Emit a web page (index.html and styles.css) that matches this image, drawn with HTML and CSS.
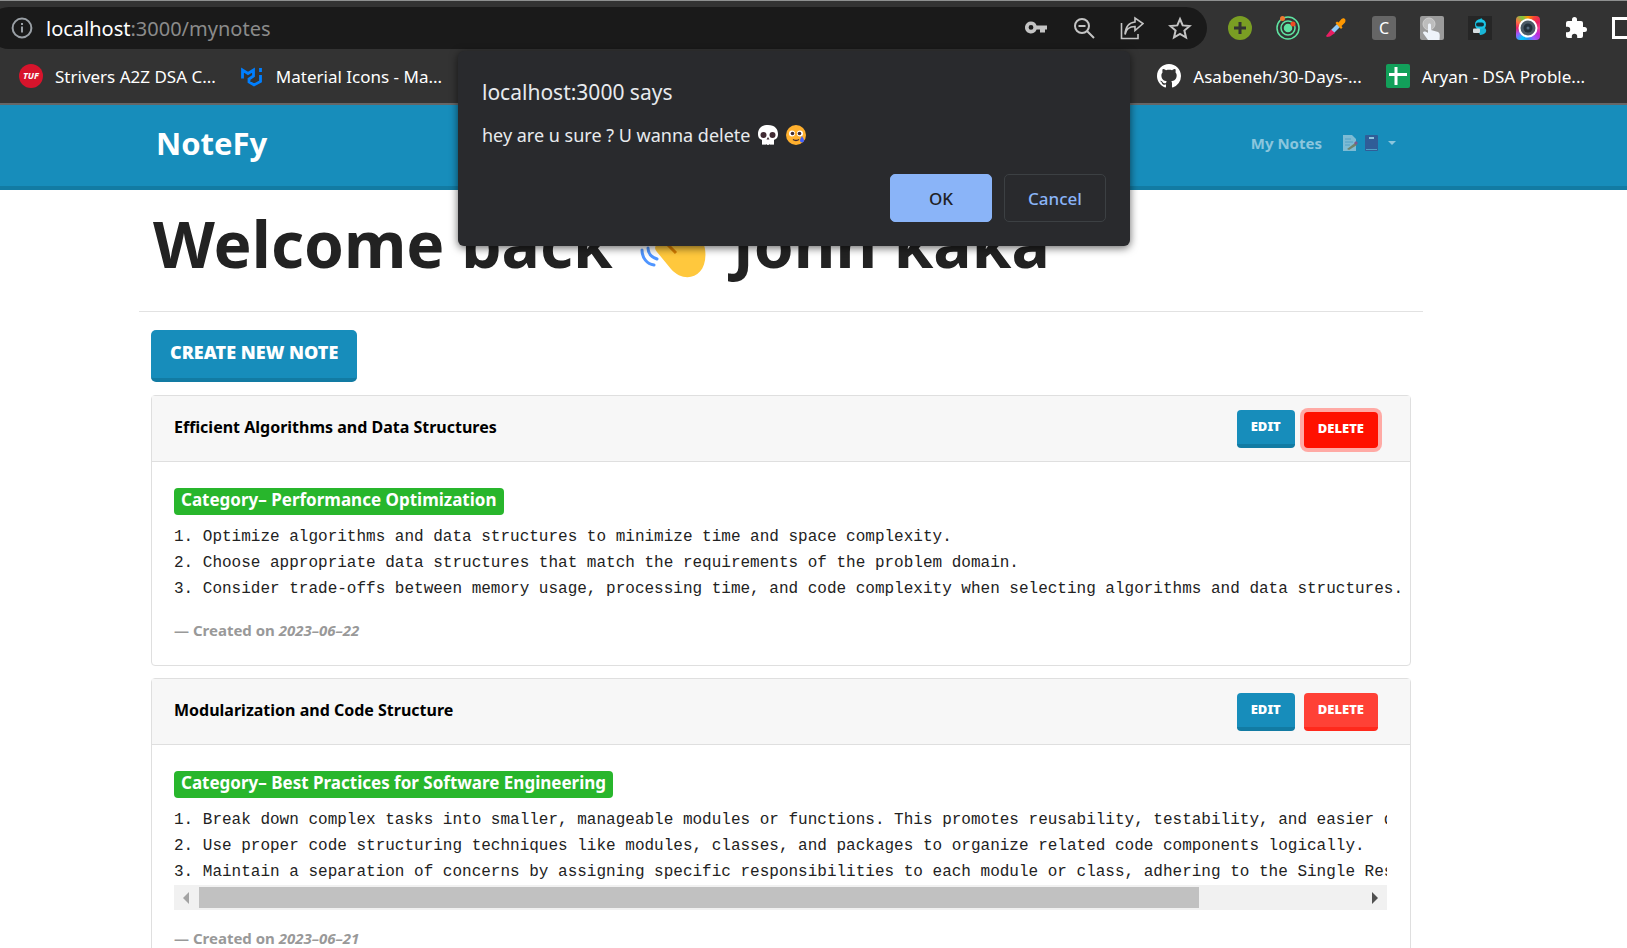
FILE: index.html
```html
<!DOCTYPE html>
<html lang="en">
<head>
<meta charset="utf-8">
<meta name="viewport" content="width=device-width, initial-scale=1">
<title>NoteFy</title>
<link rel="stylesheet" href="styles.css">
</head>
<body>
<header class="browser">
  <div class="toolbar">
    <div class="omnibox">
      <svg class="i22" viewBox="0 0 22 22" fill="none" stroke="#9aa0a6" stroke-width="2"><circle cx="11" cy="11" r="9.4"/><path d="M11 9.5v6M11 6v2"/></svg>
      <div class="url"><span class="host">localhost</span>:3000/mynotes</div>
      <div class="actions">
        <button class="icon-btn" aria-label="Passwords"><svg class="i24" viewBox="0 0 24 24"><path fill="#c4c4c4" fill-rule="evenodd" d="M7 5.5a6 6 0 1 0 5.600 8H16v3h5v-3h2v-4H12.600A6 6 0 0 0 7 5.500zM7 9a2.400 2.400 0 1 1 0 4.800A2.400 2.400 0 0 1 7 9z"/></svg></button>
        <button class="icon-btn" aria-label="Zoom"><svg class="i24" viewBox="0 0 24 24" fill="none" stroke="#c4c4c4" stroke-width="2"><circle cx="10" cy="10" r="7"/><path d="M6.500 10h7M15 15l7 7"/></svg></button>
        <button class="icon-btn" aria-label="Share"><svg class="i24" viewBox="0 0 24 24" fill="none" stroke="#c4c4c4" stroke-width="1.600"><path d="M1.500 7v15.500h16.500v-4.500M5 18.500C6 13 9 10.500 15 10.500V14.500l8-7-8-5.500V6C9 6.500 5.500 11 5 18.500z"/></svg></button>
        <button class="icon-btn" aria-label="Bookmark"><svg class="i24" viewBox="0 0 24 24" fill="none" stroke="#c4c4c4" stroke-width="2"><path d="M12 3l2.700 6.400 7 .6-5.300 4.600 1.600 6.900-6-3.700-6 3.700 1.600-6.900L2.300 10l7-.6z"/></svg></button>
      </div>
    </div>
    <div class="extensions">
      <svg class="i24" viewBox="0 0 24 24"><circle cx="12" cy="12" r="12" fill="#7a9e23"/><path d="M12 6v12M6 12h12" stroke="#333" stroke-width="3"/></svg>
      <svg class="i24" viewBox="0 0 24 24" fill="none" stroke="#5fe3a1" stroke-width="1.500"><circle cx="12" cy="12" r="11"/><circle cx="12" cy="12" r="7"/><circle cx="12" cy="12" r="3.500" fill="#5fe3a1"/><circle cx="6.500" cy="2.500" r="2.500" fill="#f07830" stroke="none"/><circle cx="17" cy="8" r="2.500" fill="#f04b23" stroke="none"/></svg>
      <svg class="i24" viewBox="0 0 24 24"><path d="M7 14l7-7 3 3-7 7-3 1z" fill="#90caf9"/><path d="M7 13.500l4 3.500-5 3.500-3 .5-1-1z" fill="#e91e63"/><path d="M11.500 7l1.500-1.500 1.500 1L17.500 3c3-2 5 1 3.500 3.500L17.500 10l1 1.500-1.500 1.500z" fill="#ff9800"/></svg>
      <span class="ext-c">C</span>
      <svg class="i24" viewBox="0 0 24 24"><rect width="24" height="24" rx="2" fill="#9b9b9b"/><circle cx="9" cy="8" r="6" fill="#bdbdbd" stroke="#cfcfcf"/><path d="M8 9c0-2 3-2 3 0v5l7 2c2 1 2 3 1.500 8H8l-5-7c0-2 2.500-2 5 0z" fill="#eef3fa"/></svg>
      <svg class="i24" viewBox="0 0 24 24"><rect width="24" height="24" fill="#262626"/><path d="M13 2l1 3" stroke="#00acc1"/><circle cx="12.500" cy="8.500" r="5.500" fill="#19c5e6"/><rect x="8" y="6.500" width="8" height="4" rx="2" fill="#12303a"/><path d="M10 14l7-2c3 3 0 7-5 7z" fill="#19b5d6"/><rect x="5" y="12.500" width="7" height="4.500" rx="1" fill="#d5dde0"/></svg>
      <span class="ext-cam"><svg class="i24" viewBox="0 0 24 24"><circle cx="12" cy="12" r="8.500" fill="#4b5a66" stroke="#fff" stroke-width="2"/><circle cx="12" cy="12" r="4.500" fill="#24313c"/><circle cx="12" cy="12" r="1.500" fill="#54687a"/></svg></span>
      <svg class="i24" viewBox="0 0 24 24"><path fill="#fff" d="M20.500 11H19V7a2 2 0 0 0-2-2h-4V3.500a2.500 2.500 0 0 0-5 0V5H4a2 2 0 0 0-2 2v3.800h1.500a2.700 2.700 0 0 1 0 5.400H2V20a2 2 0 0 0 2 2h3.800v-1.500a2.700 2.700 0 0 1 5.400 0V22H17a2 2 0 0 0 2-2v-4h1.500a2.500 2.500 0 0 0 0-5z"/></svg>
      <svg class="i24" viewBox="0 0 24 24"><rect x="1.500" y="2.500" width="21" height="19" fill="none" stroke="#fff" stroke-width="3"/></svg>
    </div>
  </div>
  <nav class="bookmarks" aria-label="Bookmarks">
    <a class="bm" href="#"><span class="tuf">TUF</span>Strivers A2Z DSA C...</a>
    <a class="bm" href="#"><svg class="i24" viewBox="0 0 24 24" fill="none" stroke="#007fff" stroke-width="2.800"><path d="M2.500 14.500V6l5.500 3.500L13.500 6v6l-4.500 3v3l5 3 6.500-3.500v-6.500M20.500 4v4"/></svg>Material Icons - Ma...</a>
    <a class="bm right" href="#"><svg class="i24" viewBox="0 0 16 16"><path fill="#fff" d="M8 0C3.580 0 0 3.580 0 8c0 3.540 2.290 6.530 5.470 7.590.4.070.55-.17.55-.38 0-.19-.01-.82-.01-1.490-2.010.37-2.530-.49-2.690-.94-.09-.23-.48-.94-.82-1.130-.28-.15-.68-.52-.01-.53.63-.01 1.080.58 1.230.82.72 1.210 1.870.87 2.330.66.07-.52.28-.87.51-1.070-1.780-.2-3.640-.89-3.640-3.950 0-.87.31-1.590.82-2.150-.08-.2-.36-1.020.08-2.120 0 0 .67-.21 2.200.82.64-.18 1.320-.27 2-.27s1.360.09 2 .27c1.530-1.040 2.200-.82 2.200-.82.44 1.100.16 1.920.08 2.120.51.56.82 1.270.82 2.150 0 3.070-1.870 3.750-3.650 3.950.29.25.54.73.54 1.480 0 1.070-.01 1.930-.01 2.200 0 .21.15.46.55.38A8.010 8.010 0 0 0 16 8c0-4.420-3.580-8-8-8z"/></svg>Asabeneh/30-Days-...</a>
    <a class="bm" href="#"><svg class="i24" viewBox="0 0 24 24"><rect width="24" height="24" rx="2" fill="#12a05a"/><path d="M10 3v18M3 10.500h18" stroke="#fff" stroke-width="3"/></svg>Aryan - DSA Proble...</a>
  </nav>
</header>

<nav class="navbar">
  <a class="brand" href="#">NoteFy</a>
  <div class="nav-links">
    <a href="#">My Notes</a>
    <button class="nav-menu" aria-label="Account menu">
      <svg class="i16" viewBox="0 0 16 16"><path d="M1 0h9l4 4v12H1z" fill="#e3e9ee"/><path d="M3 4h6M3 7h8M3 10h5" stroke="#8cb4d0"/><path d="M5 14l8-6 2 2-8 5z" fill="#c77a1c"/><path d="M12 8l2-2 2 2-2 2z" fill="#e0245e"/></svg>
      <svg class="i16" viewBox="0 0 16 16"><rect x="1" width="13" height="16" rx="1" fill="#4a2f74"/><rect x="5" y="2" width="5" height="2" fill="#fff"/><path d="M2 14.500h11" stroke="#8cb4d0"/></svg>
      <svg class="caret" viewBox="0 0 8 4"><path d="M0 0h8L4 4z" fill="#fff"/></svg>
    </button>
  </div>
</nav>

<main class="page">
  <h1 class="title">Welcome back
    <svg class="wave" viewBox="0 0 72 72"><path d="M25 32c-4-6 3-11 8-5L21 12c-4-6 4-10 8-5l12 15-8-14c-3-6 5-9 8-4l14 24-1-9c0-7 8-7 9 0l5 22c4 28-20 36-34 20L20 44c-5-6 1-10 5-6z" fill="#ffc83d"/><path d="M29 35l10 10" stroke="#d67d00" stroke-width="3"/><path d="M5 42c0 8 5 14 12 15M11 40c0 6 3 9 9 11" fill="none" stroke="#4f95ff" stroke-width="3" stroke-linecap="round"/></svg>
    John kaka</h1>
  <hr class="rule">
  <div class="content">
    <button class="btn create">CREATE NEW NOTE</button>

    <article class="card">
      <div class="card-head">
        <h2>Efficient Algorithms and Data Structures</h2>
        <button class="btn">EDIT</button>
        <button class="btn danger focused">DELETE</button>
      </div>
      <div class="card-body">
        <span class="badge">Category– Performance Optimization</span>
        <pre class="note">1. Optimize algorithms and data structures to minimize time and space complexity.
2. Choose appropriate data structures that match the requirements of the problem domain.
3. Consider trade-offs between memory usage, processing time, and code complexity when selecting algorithms and data structures.</pre>
        <footer>— Created on <cite>2023–06–22</cite></footer>
      </div>
    </article>

    <article class="card">
      <div class="card-head">
        <h2>Modularization and Code Structure</h2>
        <button class="btn">EDIT</button>
        <button class="btn danger">DELETE</button>
      </div>
      <div class="card-body">
        <span class="badge">Category– Best Practices for Software Engineering</span>
        <div class="scroller">
          <pre class="note clipped">1. Break down complex tasks into smaller, manageable modules or functions. This promotes reusability, testability, and easier debugging.
2. Use proper code structuring techniques like modules, classes, and packages to organize related code components logically.
3. Maintain a separation of concerns by assigning specific responsibilities to each module or class, adhering to the Single Responsibility Principle.</pre>
          <div class="scrollbar">
            <svg class="arrow" viewBox="0 0 25 25"><path d="M15 7v12L9 13z" fill="#a3a3a3"/></svg>
            <div class="track"><div class="thumb"></div></div>
            <svg class="arrow" viewBox="0 0 25 25"><path d="M10 7v12l6-6z" fill="#505050"/></svg>
          </div>
        </div>
        <footer>— Created on <cite>2023–06–21</cite></footer>
      </div>
    </article>
  </div>
</main>

<div class="dialog" role="alertdialog" aria-labelledby="dlg-title" aria-describedby="dlg-text">
  <h2 id="dlg-title">localhost:3000 says</h2>
  <p id="dlg-text">hey are u sure ? U wanna delete
    <svg class="emoji" viewBox="0 0 22 22"><path d="M11 1c7 0 10 4 10 9 0 4-2 5-4 6v4q-1 2-2 0-1 2-2 0-1 1-2 1t-2-1q-1 2-2 0-1 2-2 0v-4c-2-1-4-2-4-6 0-5 3-9 10-9z" fill="#fff"/><circle cx="6.500" cy="11" r="3" fill="#402a32"/><circle cx="15.500" cy="11" r="3" fill="#402a32"/><path d="M11 13l1.500 2.500h-3z" fill="#402a32"/></svg>
    <svg class="emoji" viewBox="0 0 22 22"><circle cx="11" cy="11" r="10" fill="#ffb02e"/><circle cx="7" cy="9.500" r="3" fill="#fff"/><circle cx="15" cy="9.500" r="3" fill="#fff"/><circle cx="7.500" cy="9.500" r="1.800" fill="#402a32"/><circle cx="14.500" cy="9.500" r="1.800" fill="#402a32"/><path d="M8 15.500q3 2 6 0" fill="none" stroke="#402a32" stroke-width="1.500"/><path d="M17 12q4 6 0 6.500-4-.5 0-6.500z" fill="#3f5fff"/></svg>
  </p>
  <div class="dlg-actions">
    <button class="dlg-btn primary">OK</button>
    <button class="dlg-btn">Cancel</button>
  </div>
</div>
</body>
</html>
```
FILE: styles.css
```css
* { box-sizing: border-box; }
body {
  margin: 0;
  height: 100vh;
  overflow: hidden;
  background: #fff;
  color: #222;
  font-family: "Noto Sans", sans-serif;
}
button { font-family: inherit; }
a { color: inherit; text-decoration: none; }
svg { flex: none; display: block; }
.i16 { width: 16px; height: 16px; }
.i22 { width: 22px; height: 22px; }
.i24 { width: 24px; height: 24px; }

/* Browser chrome */
.browser {
  background: #333;
  border-top: 1px solid #8e9090;
  border-bottom: 2px solid #666;
  color: #fff;
  overflow: hidden;
}
.toolbar { display: flex; align-items: center; gap: 21px; padding-top: 6px; }
.omnibox {
  flex: none;
  width: 1219px;
  max-width: 75%;
  height: 42px;
  margin-left: -12px;
  padding: 0 15px 0 23px;
  display: flex;
  align-items: center;
  gap: 13px;
  border-radius: 21px;
  background: #1a1a1a;
}
.url { flex: 1; font-size: 20px; color: #8b8b8b; }
.host { color: #fff; }
.actions { display: flex; gap: 24px; }
.icon-btn { padding: 0; border: 0; background: none; }
.extensions { display: flex; gap: 24px; }
.ext-c {
  flex: none;
  width: 24px;
  height: 24px;
  border-radius: 3px;
  background: #666;
  font-size: 16px;
  line-height: 24px;
  text-align: center;
}
.ext-cam {
  flex: none;
  border-radius: 4px;
  background: conic-gradient(#ff9800, #f44336, #e91e63, #f5428d, #c026d3, #9c5cff, #2196f3, #00c8ff, #9c5cff, #e91e63, #ff7043, #7ac943, #ff9800);
}
.bookmarks { display: flex; align-items: center; height: 54px; padding-left: 19px; gap: 24px; font-size: 17px; }
.bm { display: flex; align-items: center; gap: 12px; white-space: nowrap; }
.bm.right { margin-left: auto; }
.bm:last-child { margin-right: 42px; }
.tuf {
  width: 24px;
  height: 24px;
  border-radius: 50%;
  background: #d7142c;
  font-size: 9px;
  font-weight: 700;
  font-style: italic;
  line-height: 24px;
  text-align: center;
}

/* Site navigation */
.navbar {
  height: 85px;
  padding: 0 231px 5px 156px;
  display: flex;
  align-items: center;
  justify-content: space-between;
  background: #178dbb;
  border-bottom: 4px solid #127ba3;
}
.brand { font-size: 31px; line-height: 40px; font-weight: 700; color: #fff; }
.nav-links { display: flex; align-items: center; gap: 20px; font-size: 15px; font-weight: 700; color: #8bc6dd; }
.nav-menu { display: flex; align-items: center; gap: 6px; padding: 0; border: 0; background: none; opacity: 0.5; }
.caret { width: 8px; height: 4px; margin-left: 2px; }

/* Page */
.page { margin: 0 204px 0 139px; }
.title {
  display: flex;
  align-items: center;
  gap: 24px;
  margin: 0;
  padding: 8px 14px 0;
  font-size: 64px;
  line-height: 92px;
  font-weight: 700;
  white-space: nowrap;
}
.wave { width: 72px; height: 72px; }
.rule { margin: 21px 0 18px; border: 0; border-top: 1px solid #e2e2e2; }
.content { padding: 0 12px; }
.btn {
  height: 38px;
  padding: 0 14px 2px;
  border: 0;
  border-bottom: 4px solid #127ba3;
  border-radius: 4px;
  background: #178dbb;
  color: #fff;
  font-size: 13px;
  font-weight: 900;
}
.btn.danger { background: #ff4136; border-color: #ff291c; }
.btn.focused {
  height: 36px;
  margin-top: 2px;
  padding-bottom: 0;
  background: #ff1100;
  border-color: #ff1100;
  box-shadow: 0 0 0 4px #ffaaa5;
}
.btn.create { height: 52px; padding: 0 19px 4px; font-size: 18px; border-radius: 5px; }
.card { margin-top: 13px; border: 1px solid #dfdfdf; border-radius: 4px; }
.card + .card { margin-top: 12px; }
.card-head {
  display: flex;
  align-items: center;
  gap: 9px;
  height: 66px;
  padding: 0 32px 0 22px;
  background: #f7f7f7;
  border-bottom: 1px solid #dfdfdf;
}
.card-head h2 { flex: 1; margin: 0; padding-bottom: 3px; color: #000; font-size: 16px; font-weight: 700; }
.card-body { padding: 26px 23px 22px 22px; }
.badge {
  display: table;
  padding: 0 7px 3px;
  border-radius: 4px;
  background: #28b62c;
  color: #fff;
  font-size: 17px;
  line-height: 24px;
  font-weight: 700;
}
.note { margin: 9px 0 0; font-family: "Liberation Mono", monospace; font-size: 16px; line-height: 26px; }
.clipped { overflow: hidden; }
.scrollbar { display: flex; height: 25px; background: #f1f1f1; }
.arrow { width: 25px; height: 25px; }
.track { flex: 1; padding: 2px 0; }
.thumb { width: 86%; height: 21px; background: #c1c1c1; }
.card footer { margin-top: 15px; color: #999; font-size: 15px; line-height: 26px; font-weight: 700; }

/* Confirmation dialog */
.dialog {
  position: absolute;
  top: 51px;
  left: 458px;
  width: 672px;
  padding: 23px 24px 24px;
  border-radius: 6px;
  background: #292a2d;
  color: #e8eaed;
  box-shadow: 0 2px 8px rgba(0, 0, 0, 0.6);
}
.dialog h2 { margin: 0; font-size: 21px; line-height: 36px; font-weight: 400; }
.dialog p { display: flex; align-items: center; gap: 6px; margin: 10px 0 24px; font-size: 18px; line-height: 30px; }
.emoji { width: 22px; height: 22px; }
.dlg-actions { display: flex; justify-content: flex-end; gap: 12px; }
.dlg-btn {
  width: 102px;
  height: 48px;
  border: 1px solid #3c4043;
  border-radius: 5px;
  background: none;
  color: #8ab4f8;
  font-size: 17px;
  font-weight: 500;
}
.dlg-btn.primary { background: #8ab4f8; border-color: #8ab4f8; color: #202124; }
```
